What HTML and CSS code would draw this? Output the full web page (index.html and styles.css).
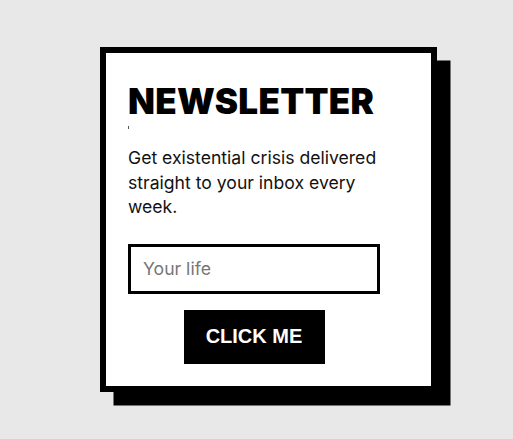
FILE: index.html
```html
<!DOCTYPE html>
<html lang="en">
<head>
    <meta charset="UTF-8">
    <meta name="viewport" content="width=device-width, initial-scale=1.0">
    <title>Newsletter</title>
    <link rel="stylesheet" href="styles.css">
</head>
<body>
<div id="page">
    <div class="card">
        <h1 class="title">NEWSLETTER</h1>
        <span class="tick"></span>
        <p class="blurb">Get existential crisis delivered straight to your inbox every week.</p>
        <form class="signup">
            <input type="email" class="email" placeholder="Your life">
            <button type="button" class="submit">CLICK ME</button>
        </form>
    </div>
</div>
</body>
</html>
```

FILE: styles.css
```css
:root {
    --bg-color: #e8e8e8;
    --ink: #000;
}

body {
    background-color: var(--bg-color);
    font-family: 'Inter', sans-serif;
    margin: 0;
}

#page {
    display: flex;
    justify-content: center;
    align-items: center;
    height: 100vh;
    padding-left: 24px;
    box-sizing: border-box;
}

.card {
    width: 252px;
    padding: 22px 51px 22px 22px;
    background: #fff;
    border: 6px solid var(--ink);
    box-shadow: 13.5px 13.5px 0 var(--ink);
}

.title {
    margin: 5px 0 0;
    font-size: 35px;
    font-weight: 900;
    letter-spacing: 0.3px;
    line-height: normal;
    color: var(--ink);
}

.tick {
    display: block;
    width: 1px;
    height: 3px;
    margin-top: 4px;
    background: #555;
}

.blurb {
    margin: 17px 0 0;
    font-size: 1.1rem;
    line-height: 1.4;
    color: #111;
}

.signup {
    display: flex;
    flex-direction: column;
}

.email {
    margin-top: 24px;
    height: 50px;
    box-sizing: border-box;
    border: 3px solid var(--ink);
    padding: 0 12px;
    font-family: 'Inter', sans-serif;
    font-size: 1.1rem;
    outline: none;
}

.email::placeholder {
    color: #767676;
}

.submit {
    align-self: center;
    margin-top: 16px;
    width: 141px;
    height: 54px;
    border: none;
    background: var(--ink);
    color: #fff;
    font-family: 'Liberation Sans', Arial, sans-serif;
    font-weight: bold;
    font-size: 20px;
    cursor: pointer;
}
```
